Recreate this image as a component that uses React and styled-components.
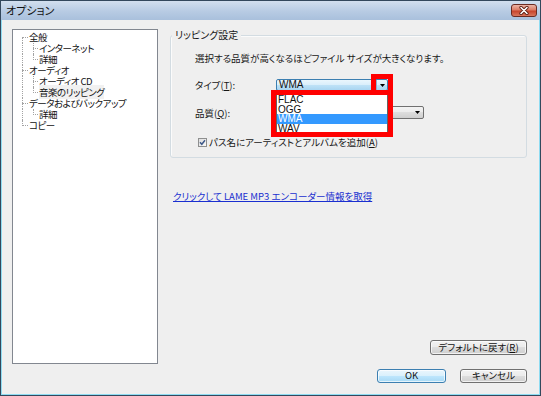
import React from "react";
import styled, { createGlobalStyle } from "styled-components";

const JP = `"Noto Sans CJK JP", "Liberation Sans", sans-serif`;
const LAT = `"Liberation Sans", "Noto Sans CJK JP", sans-serif`;

const Global = createGlobalStyle`
  html, body { margin: 0; padding: 0; background: #ffffff; }
  body { font-family: ${JP}; font-size: 9.5px; color: #161616; font-feature-settings: "palt"; }
  #root { width: 541px; height: 396px; }
  * { box-sizing: border-box; }
`;

const Window = styled.div`
  width: 541px;
  height: 396px;
  display: flex;
  flex-direction: column;
  background: #efefef;
  border: 1px solid #33485c;
  box-shadow: inset 0 0 0 1px #8fdcf2;
  overflow: hidden;
`;

const TitleBar = styled.div`
  height: 19px;
  flex: none;
  display: flex;
  align-items: center;
  justify-content: space-between;
  padding: 0 3px 0 5px;
  background: linear-gradient(#d2dfee, #b7cbe3 55%, #a9c0dc);
`;

const Title = styled.span`
  font-size: 11px;
  line-height: 1;
  color: #111;
`;

const CloseBtn = styled.div`
  width: 26px;
  height: 13px;
  border: 1px solid #6b2b22;
  border-radius: 3px;
  background: linear-gradient(#ecb5a6, #dc7c65 45%, #c8442c 55%, #d9765d);
  display: flex;
  align-items: center;
  justify-content: center;
`;

const Body = styled.div`
  flex: 1;
  display: flex;
  gap: 12px;
  padding: 9px 13px 12px 11px;
`;

const Tree = styled.div`
  flex: none;
  width: 146px;
  height: 335px;
  background: #fff;
  border: 1px solid #828790;
  padding-top: 2px;
`;

const Row = styled.div`
  position: relative;
  height: 11px;
  line-height: 11px;
  font-size: 9.5px;
  letter-spacing: -0.5px;
  padding-left: ${(p) => (p.$level ? 26 : 16)}px;
  white-space: nowrap;
  color: #111;
`;

const RowText = styled.span`
  background: ${(p) => (p.$sel ? "#f1f1f1" : "transparent")};
`;

const VLine = styled.span`
  position: absolute;
  left: ${(p) => p.$x}px;
  top: ${(p) => p.$top}px;
  height: ${(p) => p.$h}px;
  border-left: 1px dotted #a3a3a3;
`;

const HLine = styled.span`
  position: absolute;
  left: ${(p) => p.$x}px;
  top: 5px;
  width: ${(p) => p.$w}px;
  border-top: 1px dotted #a3a3a3;
`;

const Right = styled.div`
  flex: 1;
  display: flex;
  flex-direction: column;
  min-width: 0;
`;

const GroupBox = styled.div`
  margin-top: 6px;
  border: 1px solid #d3dce2;
  border-radius: 3px;
  box-shadow: inset 1px 1px 0 #fbfbfb;
  padding: 0 10px 9px 24px;
  display: flex;
  flex-direction: column;
`;

const GroupTitle = styled.div`
  align-self: flex-start;
  margin: -7px 0 0 -23px;
  padding: 0 3px;
  font-size: 10px;
  line-height: 12px;
  background: #efefef;
`;

const Desc = styled.div`
  margin-top: 11px;
  line-height: 12px;
`;

const FieldRow = styled.div`
  display: flex;
  align-items: center;
  margin-top: ${(p) => p.$mt}px;
  height: ${(p) => p.$h}px;
`;

const FieldLabel = styled.span`
  width: 81px;
  flex: none;
  line-height: 12px;
`;

const TypeCombo = styled.div`
  position: relative;
  width: 112px;
  height: 12px;
  display: flex;
  border: 1px solid #3c7fb1;
  border-radius: 2px;
  background: linear-gradient(#eaf6fd, #d9eefb 50%, #bfe2f7 50%, #a9d5f1);
`;

const ComboText = styled.span`
  flex: 1;
  font-family: ${LAT};
  font-size: 10px;
  line-height: 10px;
  padding-left: 2px;
  color: #111;
`;

const ArrowBox = styled.span`
  width: 11px;
  flex: none;
  display: flex;
  align-items: center;
  justify-content: center;
  border-left: ${(p) => (p.$sep ? "1px solid #8db2cf" : "none")};
`;

const QualityCombo = styled.div`
  width: 148px;
  height: 13px;
  display: flex;
  justify-content: flex-end;
  border: 1px solid #707070;
  border-radius: 2px;
  background: linear-gradient(#f3f3f3, #ebebeb 50%, #dddddd 50%, #cfcfcf);
`;

const RedMark = styled.div`
  position: absolute;
  left: ${(p) => p.$x}px;
  top: ${(p) => p.$y}px;
  width: ${(p) => p.$w}px;
  height: ${(p) => p.$h}px;
  border: 5px solid #ff0000;
  z-index: 3;
`;

const DropList = styled.div`
  position: absolute;
  left: -1px;
  top: 13px;
  width: 112px;
  height: 41px;
  background: #fff;
  border: 1px solid #646464;
  padding-top: 1px;
  z-index: 2;
`;

const DropItem = styled.div`
  height: 9.7px;
  line-height: 9.7px;
  font-family: ${LAT};
  font-size: 10px;
  padding-left: 1px;
  color: ${(p) => (p.$sel ? "#fff" : "#111")};
  background: ${(p) => (p.$sel ? "#3399ff" : "transparent")};
`;

const CheckLabel = styled.span`
  margin-left: 2px;
  line-height: 12px;
`;

const CheckWrap = styled.span`
  margin-left: 3px;
  display: flex;
`;

const Link = styled.a`
  margin: 32px 0 0 3px;
  line-height: 12px;
  color: #1a2fd0;
  text-decoration: underline;
  align-self: flex-start;
  cursor: pointer;
`;

const Spacer = styled.div`
  flex: 1;
`;

const Button = styled.button`
  font-family: ${JP};
  font-feature-settings: "palt";
  font-size: 9.5px;
  color: #111;
  width: ${(p) => p.$w}px;
  height: ${(p) => p.$h}px;
  padding: 0;
  line-height: 1;
  border: 1px solid ${(p) => (p.$primary ? "#3c7fb1" : "#707070")};
  border-radius: 3px;
  background: ${(p) =>
    p.$primary
      ? "linear-gradient(#eaf6fd, #d9f0fc 50%, #bee6fd 50%, #a7d9f5)"
      : "linear-gradient(#f2f2f2, #ebebeb 50%, #dddddd 50%, #cfcfcf)"};
  box-shadow: inset 0 0 0 1px rgba(255, 255, 255, 0.7);
`;

const DefaultBtnRow = styled.div`
  display: flex;
  justify-content: flex-end;
`;

const Footer = styled.div`
  display: flex;
  justify-content: flex-end;
  gap: 14px;
  margin-top: 14px;
`;

const Arrow = () => (
  <svg width="5" height="3" viewBox="0 0 5 3">
    <path d="M0 0 H5 L2.5 3 Z" fill="#000" />
  </svg>
);

const CloseX = () => (
  <svg width="12" height="9" viewBox="0 0 12 9">
    <path d="M3 1.5 L9 7.5 M9 1.5 L3 7.5" stroke="#5b1e14" strokeWidth="3.2" strokeLinecap="round" />
    <path d="M3 1.5 L9 7.5 M9 1.5 L3 7.5" stroke="#ffffff" strokeWidth="1.6" strokeLinecap="round" />
  </svg>
);

const CheckBox = () => (
  <svg width="9" height="9" viewBox="0 0 9 9">
    <defs>
      <linearGradient id="cbg" x1="0" y1="0" x2="1" y2="1">
        <stop offset="0" stopColor="#dcdcdc" />
        <stop offset="1" stopColor="#fbfbfb" />
      </linearGradient>
    </defs>
    <rect x="0.5" y="0.5" width="8" height="8" fill="url(#cbg)" stroke="#8e8f8f" />
    <path d="M2 4.3 L3.8 6.3 L7 2.2" fill="none" stroke="#3f5a8a" strokeWidth="1.5" />
  </svg>
);

const treeItems = [
  { label: "全般", level: 0, first: true },
  { label: "インターネット", level: 1 },
  { label: "詳細", level: 1, last: true },
  { label: "オーディオ", level: 0 },
  { label: "オーディオ CD", level: 1 },
  { label: "音楽のリッピング", level: 1, last: true, sel: true },
  { label: "データおよびバックアップ", level: 0 },
  { label: "詳細", level: 1, last: true },
  { label: "コピー", level: 0, last: true },
];

const TreeRow = ({ item }) => {
  if (item.level === 0) {
    const top = item.first ? 5 : 0;
    const h = item.last ? 6 : item.first ? 6 : 11;
    return (
      <Row $level={0}>
        <VLine $x={9} $top={top} $h={h} />
        <HLine $x={9} $w={6} />
        <RowText>{item.label}</RowText>
      </Row>
    );
  }
  return (
    <Row $level={1}>
      <VLine $x={9} $top={0} $h={11} />
      <VLine $x={20} $top={0} $h={item.last ? 6 : 11} />
      <HLine $x={20} $w={5} />
      <RowText $sel={item.sel}>{item.label}</RowText>
    </Row>
  );
};

export default function App() {
  return (
    <>
      <Global />
      <Window>
        <TitleBar>
          <Title>オプション</Title>
          <CloseBtn>
            <CloseX />
          </CloseBtn>
        </TitleBar>
        <Body>
          <Tree>
            {treeItems.map((it, i) => (
              <TreeRow key={i} item={it} />
            ))}
          </Tree>
          <Right>
            <GroupBox>
              <GroupTitle>リッピング設定</GroupTitle>
              <Desc>選択する品質が高くなるほどファイル サイズが大きくなります。</Desc>
              <FieldRow $mt={15} $h={12}>
                <FieldLabel>
                  タイプ(<u>T</u>):
                </FieldLabel>
                <TypeCombo>
                  <ComboText>WMA</ComboText>
                  <ArrowBox $sep>
                    <Arrow />
                  </ArrowBox>
                  <RedMark $x={94} $y={-6} $w={22} $h={21} />
                  <DropList>
                    <DropItem>FLAC</DropItem>
                    <DropItem>OGG</DropItem>
                    <DropItem $sel>WMA</DropItem>
                    <DropItem>WAV</DropItem>
                  </DropList>
                  <RedMark $x={-6} $y={10} $w={122} $h={47} />
                </TypeCombo>
              </FieldRow>
              <FieldRow $mt={15} $h={13}>
                <FieldLabel>
                  品質(<u>Q</u>):
                </FieldLabel>
                <QualityCombo>
                  <ArrowBox>
                    <Arrow />
                  </ArrowBox>
                </QualityCombo>
              </FieldRow>
              <FieldRow $mt={17} $h={12}>
                <CheckWrap>
                  <CheckBox />
                </CheckWrap>
                <CheckLabel>
                  パス名にアーティストとアルバムを追加(<u>A</u>)
                </CheckLabel>
              </FieldRow>
            </GroupBox>
            <Link>クリックして LAME MP3 エンコーダー情報を取得</Link>
            <Spacer />
            <DefaultBtnRow>
              <Button $w={97} $h={15}>
                デフォルトに戻す(<u>R</u>)
              </Button>
            </DefaultBtnRow>
            <Footer>
              <Button $w={69} $h={14} $primary>
                OK
              </Button>
              <Button $w={67} $h={14}>
                キャンセル
              </Button>
            </Footer>
          </Right>
        </Body>
      </Window>
    </>
  );
}
